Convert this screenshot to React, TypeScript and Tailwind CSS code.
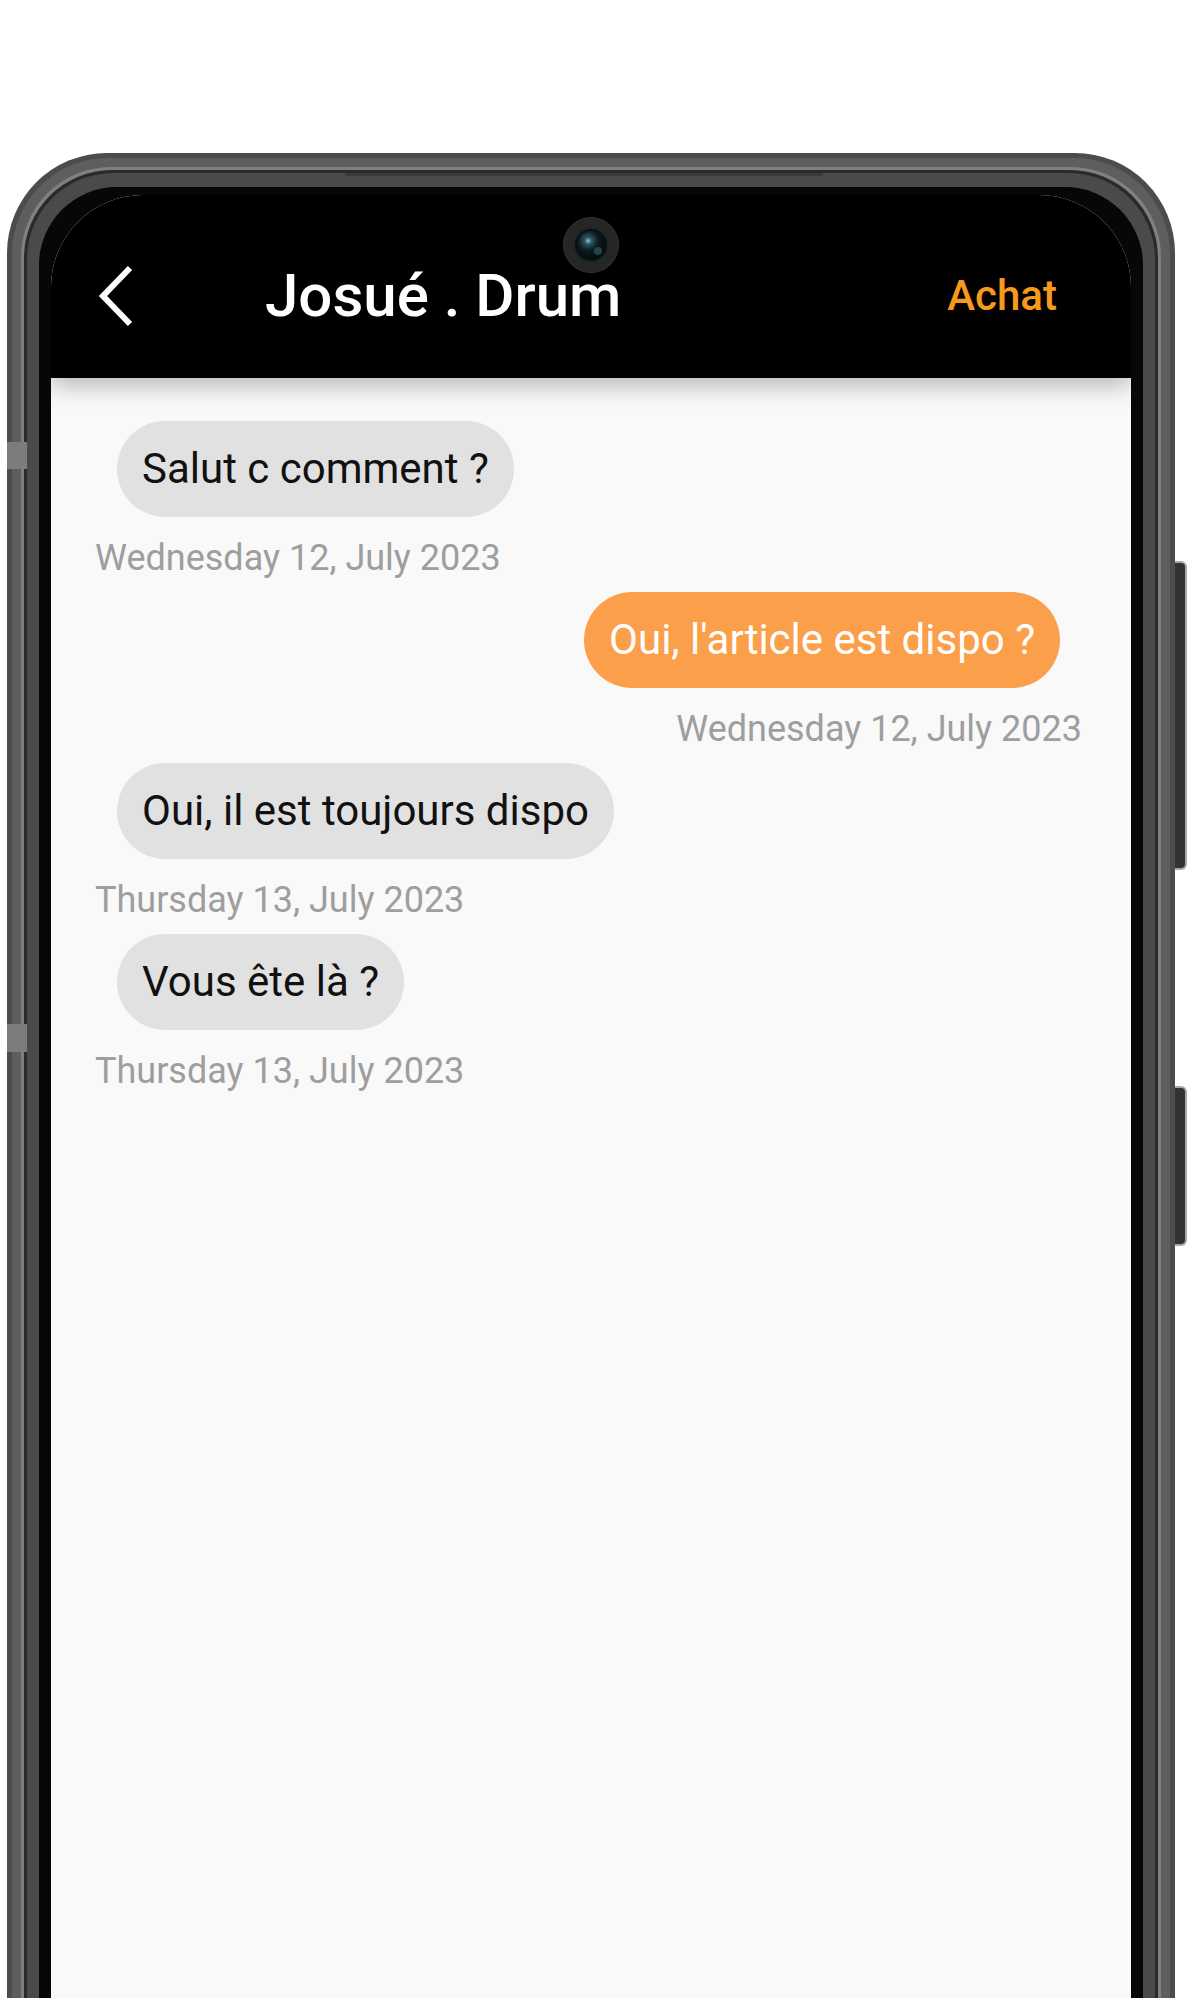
import React from 'react';

type Msg = { text: string; date: string; mine?: boolean };

const messages: Msg[] = [
  { text: 'Salut c comment ?', date: 'Wednesday 12, July 2023' },
  { text: "Oui, l'article est dispo ?", date: 'Wednesday 12, July 2023', mine: true },
  { text: 'Oui, il est toujours dispo', date: 'Thursday 13, July 2023' },
  { text: 'Vous ête là ?', date: 'Thursday 13, July 2023' },
];

const Camera: React.FC = () => (
  <svg width="56" height="56" viewBox="0 0 56 56" className="absolute left-[512px] top-[22px]">
    <defs>
      <radialGradient id="lens" cx="0.4" cy="0.35" r="0.7">
        <stop offset="0" stopColor="#8cc3d2" />
        <stop offset="0.18" stopColor="#2c5561" />
        <stop offset="0.5" stopColor="#0d1b20" />
        <stop offset="1" stopColor="#05090b" />
      </radialGradient>
    </defs>
    <circle cx="28" cy="28" r="27.5" fill="#262626" stroke="#343434" strokeWidth="1" />
    <circle cx="28" cy="28" r="17" fill="#0a0f12" stroke="#1b262b" strokeWidth="2" />
    <circle cx="28" cy="28" r="14" fill="url(#lens)" />
    <circle cx="35" cy="34" r="4" fill="#2e5c52" opacity="0.7" />
  </svg>
);

const Bubble: React.FC<{ m: Msg }> = ({ m }) => (
  <div className={`flex flex-col ${m.mine ? 'items-end' : 'items-start'}`}>
    <div
      className={`rounded-full px-[25px] py-[23px] text-[42px] leading-[50px] ${
        m.mine ? 'mr-[22px] bg-[#fc9f4a] text-white' : 'ml-[22px] bg-[#e1e1e1] text-[#111111]'
      }`}
    >
      {m.text}
    </div>
    <div className="mt-[20px] text-[36px] leading-[42px] text-[#9e9e9e]">{m.date}</div>
  </div>
);

export default function App() {
  return (
    <div className="h-[1998px] w-[1199px] overflow-hidden bg-white pl-[7px] pt-[153px] font-['Roboto',sans-serif]">
      <div className="relative h-[1900px] w-[1168px]">
        {/* side buttons */}
        <div className="absolute right-[-12px] top-[408px] h-[309px] w-[12px] rounded-r-[6px] border-y-2 border-r-2 border-[#a8a8a8] bg-[#333333]" />
        <div className="absolute right-[-12px] top-[933px] h-[160px] w-[12px] rounded-r-[6px] border-y-2 border-r-2 border-[#a8a8a8] bg-[#333333]" />

        <div className="flex h-full flex-col rounded-t-[100px] bg-[#4c4c4c] px-[5px] pt-[5px]">
          <div className="flex flex-1 flex-col rounded-t-[96px] bg-[#5e5e5e] px-[9px] pt-[9px]">
            <div className="flex flex-1 flex-col rounded-t-[90px] bg-[#808080] px-[3px] pt-[3px]">
              <div className="flex flex-1 flex-col rounded-t-[88px] bg-[#2a2a2a] px-[3px] pt-[3px]">
                <div className="flex flex-1 flex-col rounded-t-[86px] bg-[#4a4a4a] px-[12px] pt-[14px]">
                  <div className="relative flex flex-1 flex-col rounded-t-[78px] bg-[#070707] px-[12px] pt-[8px]">
                    {/* earpiece slit */}
                    <div className="absolute left-[306px] right-[320px] top-[-14px] h-[3px] bg-[#3a3a3a]" />
                    <div className="relative flex flex-1 flex-col overflow-hidden rounded-t-[92px] bg-[#f9f9f9]">
                      {/* header */}
                      <div className="relative z-10 flex h-[183px] items-center bg-black pt-[18px] shadow-[0_6px_24px_rgba(0,0,0,0.3)]">
                        <svg width="40" height="64" viewBox="0 0 40 64" className="ml-[44px] shrink-0">
                          <path d="M35 4 L8 32 L35 60" fill="none" stroke="#ffffff" strokeWidth="6" />
                        </svg>
                        <div className="ml-[130px] text-[60px] font-medium leading-[60px] text-white">Josué . Drum</div>
                        <div className="ml-auto mr-[74px] text-[42px] font-medium leading-[42px] text-[#f6991c]">Achat</div>
                        <Camera />
                      </div>

                      {/* messages */}
                      <div className="flex flex-col gap-[13px] pl-[44px] pr-[49px] pt-[43px]">
                        {messages.map((m, i) => (
                          <Bubble key={i} m={m} />
                        ))}
                      </div>
                    </div>
                  </div>
                </div>
              </div>
            </div>
          </div>
        </div>

        {/* left side marks */}
        <div className="absolute left-0 top-[289px] h-[27px] w-[20px] bg-[#7c7c7c]" />
        <div className="absolute left-0 top-[871px] h-[28px] w-[20px] bg-[#7c7c7c]" />
      </div>
    </div>
  );
}
